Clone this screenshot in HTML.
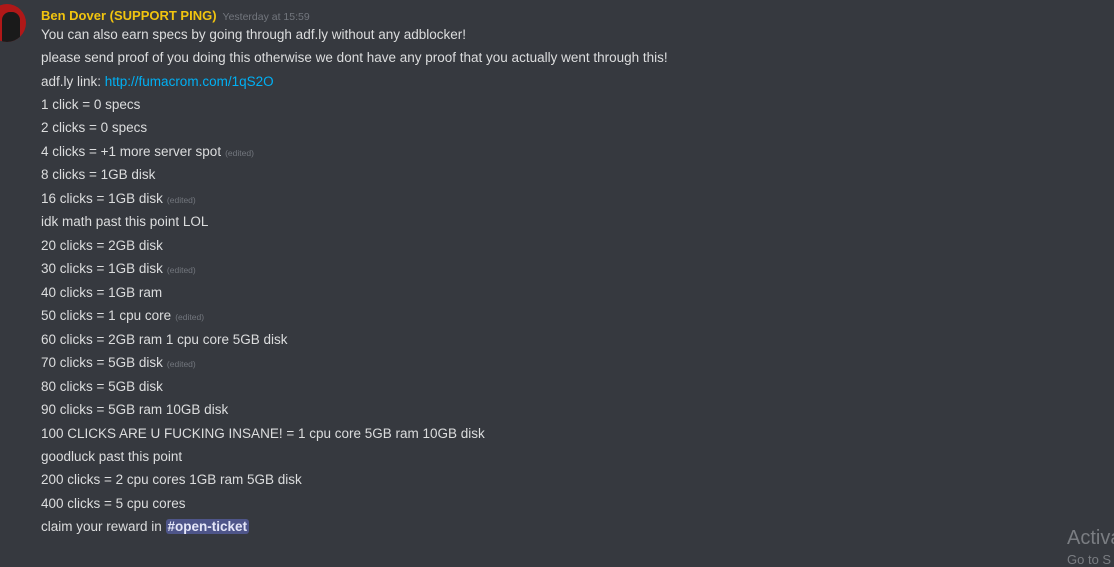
<!DOCTYPE html>
<html><head><style>
body{margin:0;width:1114px;height:562px;background:#36393f;overflow:hidden;font-family:"Liberation Sans",sans-serif;position:relative}
.av{position:absolute;left:-12px;top:4px;width:38px;height:38px;border-radius:50%;background:#b01818;overflow:hidden}
.av:after{content:"";position:absolute;left:14px;top:8px;width:18px;height:32px;background:#1a1a1a;border-radius:8px 8px 2px 2px}
.name{position:absolute;left:41px;top:8px;color:#f1c40f;font-size:13px;font-weight:bold}
.ts{font-weight:normal;color:#72767d;font-size:10.5px;margin-left:6px}
.l{position:absolute;left:41px;color:#dcddde;font-size:13.5px;white-space:nowrap;line-height:16px}
.e{color:#72767d;font-size:8.5px;margin-left:4px}
a{color:#00b0f4;text-decoration:none}
.m{background:#4e5589;color:#e4e6f8;padding:0 2px;border-radius:3px;font-weight:bold}
.act{position:absolute;left:1067px;top:527px;color:#7a7d82;font-size:20px}
.go{position:absolute;left:1067px;top:552px;color:#7a7d82;font-size:13px}
</style></head><body>
<div class="av"></div>
<div class="name">Ben Dover (SUPPORT PING)<span class="ts">Yesterday at 15:59</span></div>
<div class="l" style="top:27px">You can also earn specs by going through adf.ly without any adblocker!</div>
<div class="l" style="top:50px">please send proof of you doing this otherwise we dont have any proof that you actually went through this!</div>
<div class="l" style="top:74px">adf.ly link: <a>http://fumacrom.com/1qS2O</a></div>
<div class="l" style="top:97px">1 click = 0 specs</div>
<div class="l" style="top:120px">2 clicks = 0 specs</div>
<div class="l" style="top:144px">4 clicks = +1 more server spot<span class="e">(edited)</span></div>
<div class="l" style="top:167px">8 clicks = 1GB disk</div>
<div class="l" style="top:191px">16 clicks = 1GB disk<span class="e">(edited)</span></div>
<div class="l" style="top:214px">idk math past this point LOL</div>
<div class="l" style="top:238px">20 clicks = 2GB disk</div>
<div class="l" style="top:261px">30 clicks = 1GB disk<span class="e">(edited)</span></div>
<div class="l" style="top:285px">40 clicks = 1GB ram</div>
<div class="l" style="top:308px">50 clicks = 1 cpu core<span class="e">(edited)</span></div>
<div class="l" style="top:332px">60 clicks = 2GB ram 1 cpu core 5GB disk</div>
<div class="l" style="top:355px">70 clicks = 5GB disk<span class="e">(edited)</span></div>
<div class="l" style="top:379px">80 clicks = 5GB disk</div>
<div class="l" style="top:402px">90 clicks = 5GB ram 10GB disk</div>
<div class="l" style="top:426px">100 CLICKS ARE U FUCKING INSANE! = 1 cpu core 5GB ram 10GB disk</div>
<div class="l" style="top:449px">goodluck past this point</div>
<div class="l" style="top:472px">200 clicks = 2 cpu cores 1GB ram 5GB disk</div>
<div class="l" style="top:496px">400 clicks = 5 cpu cores</div>
<div class="l" style="top:519px">claim your reward in <span class="m">#open-ticket</span></div>
<div class="act">Activa</div>
<div class="go">Go to S</div>
</body></html>
